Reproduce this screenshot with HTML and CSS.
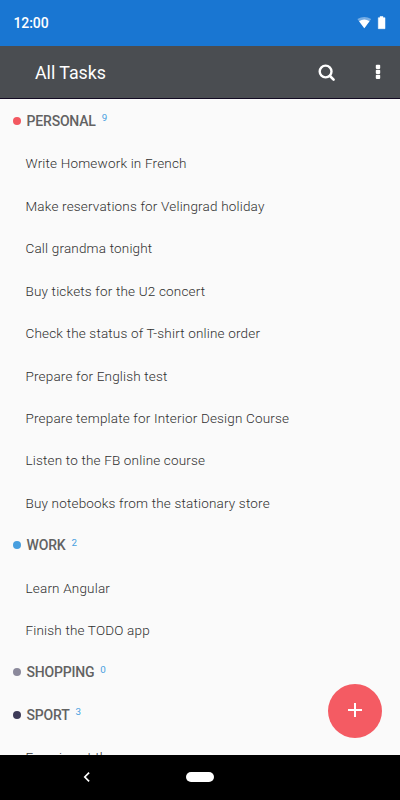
FILE: index.html
```html
<!DOCTYPE html>
<html lang="en">
<head>
<meta charset="utf-8">
<title>All Tasks</title>
<link rel="stylesheet" href="styles.css">
</head>
<body>
<div class="screen">
  <div class="status">
    <span class="clock">12:00</span>
    <svg class="status-icons" width="30" height="14" viewBox="0 0 30 14">
      <path d="M.4 3.1Q7.3-1.1 14.2 3.1L7.3 12.2z" fill="#fff" opacity=".4"/>
      <path d="M2.1 5.2Q7.3 1.7 12.5 5.2L7.3 12.2z" fill="#fff"/>
      <path d="M23 .5h3v1.2h2v11H21.3v-11H23z" fill="#fff" stroke="#fff" stroke-width=".5" stroke-linejoin="round"/>
    </svg>
  </div>
  <header class="toolbar">
    <h1 class="title">All Tasks</h1>
    <svg class="search" width="18" height="18" viewBox="0 0 18 18" fill="none" stroke="#fff">
      <circle cx="7.6" cy="7.5" r="5.9" stroke-width="2.4"/>
      <path d="M12 12l3.6 3.6" stroke-width="2.6" stroke-linecap="round"/>
    </svg>
    <svg class="more" width="6" height="16" viewBox="0 0 6 16" fill="#fff">
      <rect x=".8" y=".8" width="4.4" height="4.2" rx="1"/>
      <rect x=".8" y="5.8" width="4.4" height="4.2" rx="1"/>
      <rect x=".8" y="10.8" width="4.4" height="4.2" rx="1"/>
    </svg>
  </header>
  <main class="list">
    <h2 class="group"><i class="dot red"></i>PERSONAL<span class="count">9</span></h2>
    <p class="task">Write Homework in French</p>
    <p class="task">Make reservations for Velingrad holiday</p>
    <p class="task">Call grandma tonight</p>
    <p class="task">Buy tickets for the U2 concert</p>
    <p class="task">Check the status of T-shirt online order</p>
    <p class="task">Prepare for English test</p>
    <p class="task">Prepare template for Interior Design Course</p>
    <p class="task">Listen to the FB online course</p>
    <p class="task">Buy notebooks from the stationary store</p>
    <h2 class="group"><i class="dot blue"></i>WORK<span class="count">2</span></h2>
    <p class="task">Learn Angular</p>
    <p class="task">Finish the TODO app</p>
    <h2 class="group"><i class="dot gray"></i>SHOPPING<span class="count">0</span></h2>
    <h2 class="group"><i class="dot navy"></i>SPORT<span class="count">3</span></h2>
    <p class="task">Exercise at the gym</p>
  </main>
  <nav class="nav">
    <svg class="back" width="8" height="12" viewBox="0 0 8 12" fill="none" stroke="#fff" stroke-width="1.7"><path d="M6.1 1.7L1.8 6l4.3 4.3"/></svg>
    <span class="home"></span>
  </nav>
  <button class="fab" aria-label="Add task">
    <svg width="16" height="16" viewBox="0 0 16 16" stroke="#fff" stroke-width="2"><path d="M8 1v14M1 8h14"/></svg>
  </button>
</div>
</body>
</html>
```
FILE: styles.css
```css
* { box-sizing: border-box; margin: 0; }
body { font-family: Roboto, "Liberation Sans", sans-serif; background: #fafafa; }
.screen { position: relative; width: 400px; height: 800px; display: flex; flex-direction: column; overflow: hidden; }
.status { height: 46px; flex: none; background: #1976d2; display: flex; align-items: center; justify-content: space-between; padding: 0 12px 0 13.5px; }
.clock { color: #fff; font-size: 14px; font-weight: 500; letter-spacing: -0.1px; }
.status-icons { margin-right: 1px; }
.toolbar { height: 53px; flex: none; background: #4a4d51; border-bottom: 1px solid #120a22; display: flex; align-items: center; padding: 0 19px 0 35px; }
.title { flex: 1; color: #fff; font-size: 17.8px; font-weight: 400; line-height: 22px; padding-top: 2px; }
.search { margin: 2px 39px 0 0; }
.list { flex: 1; min-height: 0; overflow: hidden; padding-top: 1px; }
.group, .task { height: 42.43px; line-height: 42.43px; white-space: nowrap; }
.group { display: flex; align-items: center; padding-left: 12.6px; font-size: 14px; letter-spacing: -0.2px; font-weight: 500; color: #626262; }
.dot { width: 8px; height: 8px; border-radius: 50%; margin: -1px 6px 0 0; }
.red { background: #f35860; }
.blue { background: #489fdf; }
.gray { background: #8b899b; }
.navy { background: #3d3b58; }
.count { font-size: 9.8px; font-weight: 400; color: #489fdf; margin: -5px 0 0 6px; }
.task { padding: 0 0 0 25.5px; font-size: 13.5px; font-weight: 300; letter-spacing: 0.18px; color: #303030; }
.nav { height: 45px; flex: none; background: #000; display: flex; align-items: center; padding: 0 0 1px 83px; }
.home { width: 28px; height: 10px; border-radius: 5px; background: #fff; margin-left: 95px; }
.fab { position: absolute; left: 328px; top: 683.5px; width: 54px; height: 54px; border: 0; border-radius: 50%; background: #f45b63; display: flex; align-items: center; justify-content: center; padding: 0 0 1px; }
```
